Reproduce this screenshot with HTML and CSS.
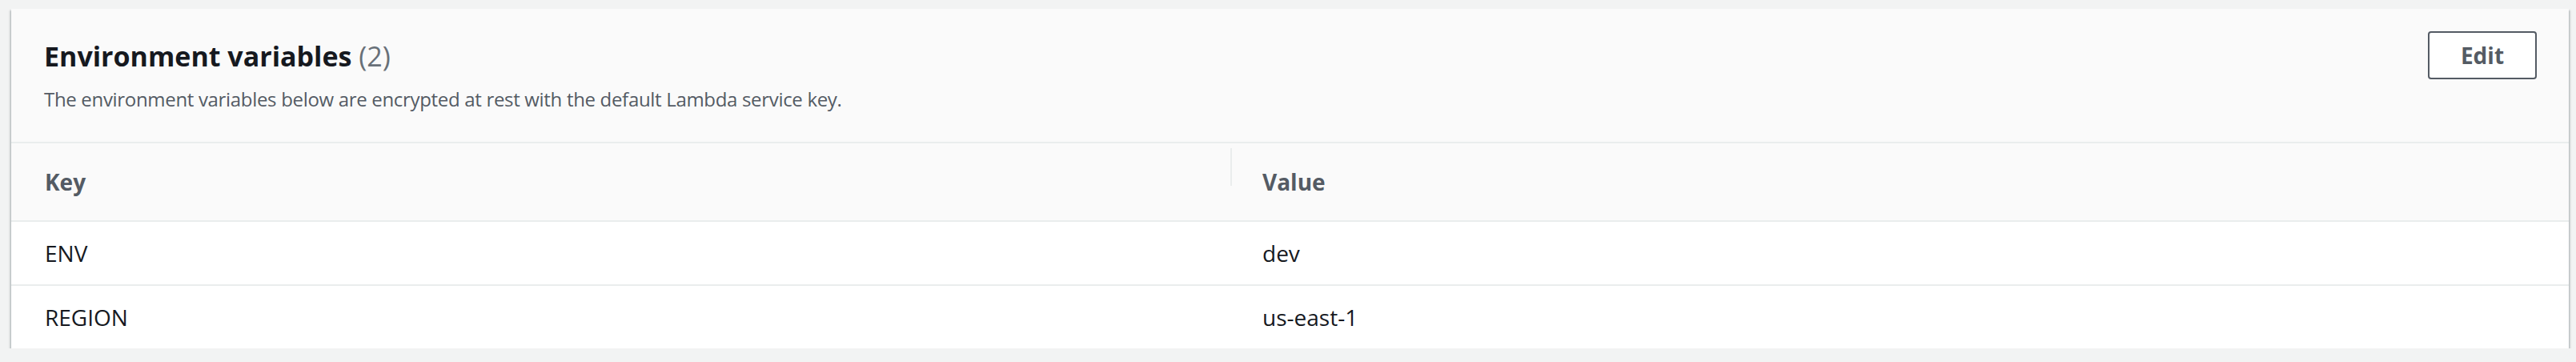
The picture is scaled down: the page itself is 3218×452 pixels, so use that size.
FILE: index.html
```html
<!DOCTYPE html>
<html>
<head>
<meta charset="utf-8">
<link rel="stylesheet" href="styles.css">
</head>
<body>
<section class="card">
  <header class="card-header">
    <div class="heading">
      <h2 class="title">Environment variables <span class="count">(2)</span></h2>
      <p class="desc">The environment variables below are encrypted at rest with the default Lambda service key.</p>
    </div>
    <button class="btn">Edit</button>
  </header>
  <div class="table">
    <div class="row head">
      <div class="cell">Key</div>
      <div class="cell val">Value</div>
    </div>
    <div class="row">
      <div class="cell">ENV</div>
      <div class="cell">dev</div>
    </div>
    <div class="row">
      <div class="cell">REGION</div>
      <div class="cell">us-east-1</div>
    </div>
  </div>
</section>
</body>
</html>
```
FILE: styles.css
```css
html, body {
  margin: 0;
  background: #f2f3f3;
}
body {
  padding: 11px 9px 0 14px;
  font-family: "Open Sans", "Noto Sans", sans-serif;
  color: #16191f;
}
.card {
  background: #ffffff;
  box-shadow: 0 2px 2px 0 rgba(0, 28, 36, 0.3), 2px 2px 2px 0 rgba(0, 28, 36, 0.15), -2px 2px 2px 0 rgba(0, 28, 36, 0.15);
}
.card-header {
  display: flex;
  justify-content: space-between;
  align-items: flex-start;
  background: #fafafa;
  padding: 28px 40px 37px 41px;
  border-bottom: 2px solid #eaeded;
}
.heading {
  padding-top: 9px;
}
.title {
  margin: 0;
  font-size: 34px;
  line-height: 45px;
  font-weight: 700;
  color: #16191f;
}
.count {
  font-weight: 400;
  color: #687078;
}
.desc {
  margin: 15px 0 0;
  font-size: 24px;
  line-height: 32px;
  letter-spacing: -0.32px;
  color: #545b64;
}
.btn {
  width: 136px;
  height: 60px;
  background: #ffffff;
  border: 2px solid #545b64;
  border-radius: 4px;
  font-family: "Open Sans", "Noto Sans", sans-serif;
  font-size: 28px;
  font-weight: 700;
  color: #545b64;
  padding: 0;
}
.row {
  display: grid;
  grid-template-columns: 1523px 1fr;
  align-items: center;
  height: 78px;
  border-top: 2px solid #eaeded;
  font-size: 28px;
}
.row.head {
  height: 96px;
  border-top: 0;
  background: #fafafa;
  font-weight: 700;
  color: #545b64;
}
.cell {
  padding-left: 42px;
}
.cell + .cell {
  padding-left: 40px;
}
.val {
  position: relative;
}
.val::before {
  content: "";
  position: absolute;
  left: 0;
  top: -23px;
  width: 2px;
  height: 47px;
  background: #eaeded;
}
```
